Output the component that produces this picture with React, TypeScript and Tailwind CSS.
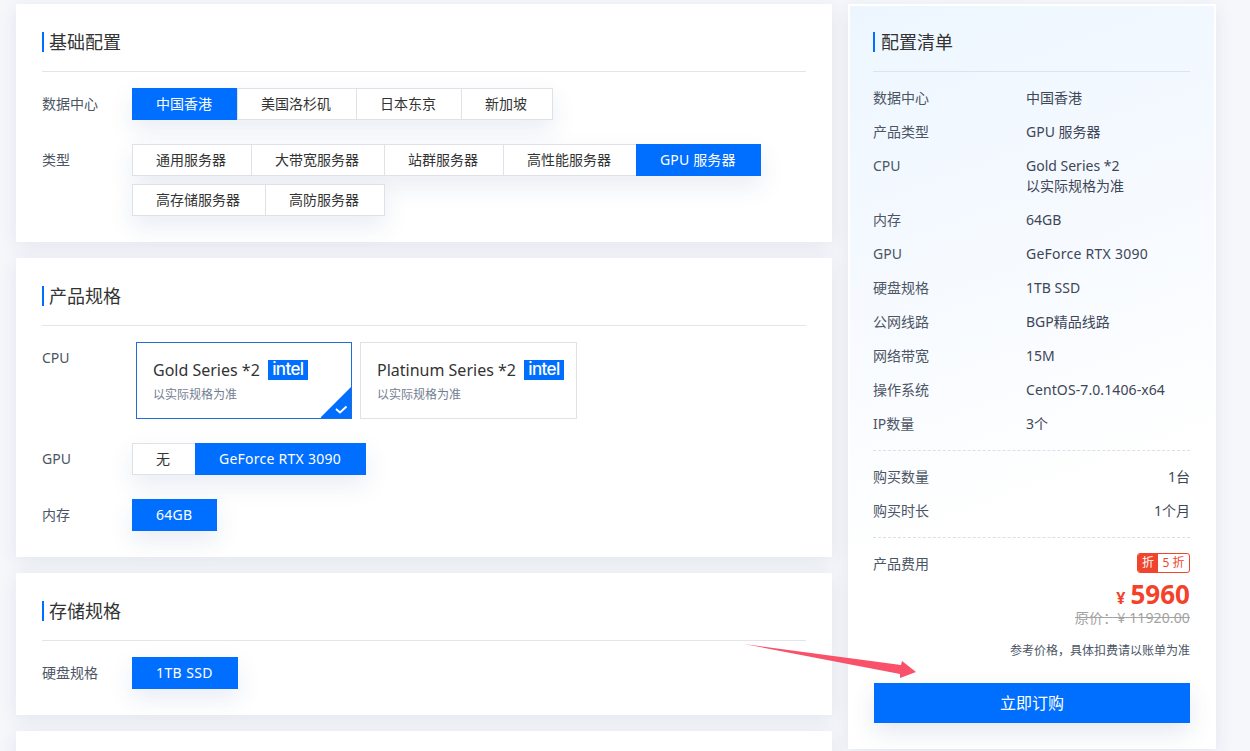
import React from "react";

const Heading = ({ children }: { children: React.ReactNode }) => (
  <div className="h-[68px] pt-7 border-b border-[#e3e5ea]">
    <div className="flex items-center h-5 border-l-2 border-[#006eff] pl-[5px] text-[18px] leading-5 text-[#333]">{children}</div>
  </div>
);

const Label = ({ children }: { children: React.ReactNode }) => (
  <div className="w-[90px] shrink-0 text-[14px] leading-8 text-[#4b5563]">{children}</div>
);

type Opt = { t: string; on?: boolean; wide?: string };

const Seg = ({ items }: { items: Opt[] }) => (
  <div className="flex h-8 w-fit shadow-[0_10px_24px_rgba(30,70,140,0.1)]">
    {items.map((o, i) => (
      <div
        key={o.t}
        className={
          (o.wide ?? "") +
          " " +
          (o.on
            ? "pl-[23px] pr-[25px] bg-[#006eff] border border-[#006eff] border-r-0 text-white text-[14px] leading-[30px] whitespace-nowrap"
            : i === items.length - 1
            ? "pl-[23px] pr-[25px] bg-white border border-[#dfe1e6] text-[#333] text-[14px] leading-[30px] whitespace-nowrap"
            : "pl-[23px] pr-[25px] bg-white border border-[#dfe1e6] border-r-0 text-[#333] text-[14px] leading-[30px] whitespace-nowrap")
        }
      >
        {o.t}
      </div>
    ))}
  </div>
);

const Card = ({ children }: { children: React.ReactNode }) => (
  <section className="bg-white px-[26px] pb-[26px] shadow-[0_4px_18px_rgba(40,60,100,0.09)]">{children}</section>
);

const CpuCard = ({ name, on }: { name: string; on?: boolean }) => (
  <div
    className={
      on
        ? "relative h-[77px] min-w-[216px] pl-4 pr-3 pt-[17px] bg-white border border-[#1f6fd6]"
        : "relative h-[77px] min-w-[216px] pl-4 pr-3 pt-[17px] bg-white border border-[#dfe1e6]"
    }
  >
    <div className="flex items-center h-5 text-[16px] text-[#333] whitespace-nowrap">
      <span>{name}</span>
      <span className="ml-2 w-10 h-5 bg-[#006eff] text-white font-['Inter',sans-serif] font-medium text-[17px] leading-[19px] text-center tracking-[-0.6px]">intel</span>
    </div>
    <div className="mt-[7px] text-[12px] leading-4 text-[#737d92]">以实际规格为准</div>
    {on && (
      <svg className="absolute right-0 bottom-0" width="30" height="31" viewBox="1 0 30 31">
        <path d="M31 0V31H0Z" fill="#006eff" />
        <path d="M16 22l4 3.5 6.5-6" fill="none" stroke="#fff" strokeWidth="2" />
      </svg>
    )}
  </div>
);

const Row = ({ k, v, sub, wide }: { k: string; v: string; sub?: string; wide?: string }) => (
  <div className="flex mb-[14px] text-[14px] leading-5">
    <div className="w-[153px] shrink-0 text-[#4b5563]">{k}</div>
    <div className="text-[#3d4656]">
      <div className={wide}>{v}</div>
      {sub && <div className="text-[#3d4656]">{sub}</div>}
    </div>
  </div>
);

const Between = ({ k, v }: { k: string; v: string }) => (
  <div className="flex justify-between mb-[14px] text-[14px] leading-5 text-[#4b5563]">
    <span>{k}</span>
    <span className="text-[#3d4656]">{v}</span>
  </div>
);

export default function App() {
  return (
    <div className="relative h-[751px] w-[1250px] overflow-hidden bg-[#f5f7fb] font-['Noto_Sans','Noto_Sans_CJK_SC',sans-serif]">
      <div className="flex items-start gap-4 pl-4 pt-1">
        <main className="w-[816px] shrink-0 flex flex-col gap-4">
          <Card>
            <Heading>基础配置</Heading>
            <div className="flex mt-4">
              <Label>数据中心</Label>
              <Seg items={[{ t: "中国香港", on: true }, { t: "美国洛杉矶" }, { t: "日本东京" }, { t: "新加坡" }]} />
            </div>
            <div className="flex mt-6">
              <Label>类型</Label>
              <div className="flex flex-col gap-2">
                <Seg items={[{ t: "通用服务器" }, { t: "大带宽服务器" }, { t: "站群服务器" }, { t: "高性能服务器" }, { t: "GPU 服务器", on: true, wide: "tracking-[0.15px]" }]} />
                <Seg items={[{ t: "高存储服务器" }, { t: "高防服务器" }]} />
              </div>
            </div>
          </Card>
          <Card>
            <Heading>产品规格</Heading>
            <div className="flex mt-4">
              <Label>CPU</Label>
              <div className="flex gap-2 ml-1">
                <CpuCard name="Gold Series *2" on />
                <CpuCard name="Platinum Series *2" />
              </div>
            </div>
            <div className="flex mt-6">
              <Label>GPU</Label>
              <Seg items={[{ t: "无" }, { t: "GeForce RTX 3090", on: true, wide: "tracking-[0.25px]" }]} />
            </div>
            <div className="flex mt-6">
              <Label>内存</Label>
              <Seg items={[{ t: "64GB", on: true, wide: "tracking-[0.25px]" }]} />
            </div>
          </Card>
          <Card>
            <Heading>存储规格</Heading>
            <div className="flex mt-4">
              <Label>硬盘规格</Label>
              <Seg items={[{ t: "1TB SSD", on: true, wide: "tracking-[0.4px]" }]} />
            </div>
          </Card>
          <Card>
            <div className="h-[100px]" />
          </Card>
        </main>

        <aside className="w-[368px] h-[745px] shrink-0 border-2 border-white bg-[linear-gradient(160deg,#edf6ff_0%,#f6faff_35%,#ffffff_65%)] pl-[23px] pr-[24px] shadow-[0_4px_18px_rgba(40,60,100,0.09)]">
          <div className="h-[66px] pt-[26px] border-b border-[#dfe4ec]">
            <div className="flex items-center h-5 border-l-2 border-[#006eff] pl-[6px] text-[18px] leading-5 text-[#333]">配置清单</div>
          </div>
          <div className="mt-4">
            <Row k="数据中心" v="中国香港" />
            <Row k="产品类型" v="GPU 服务器" />
            <Row k="CPU" v="Gold Series *2" sub="以实际规格为准" />
            <Row k="内存" v="64GB" />
            <Row k="GPU" v="GeForce RTX 3090" wide="tracking-[0.25px]" />
            <Row k="硬盘规格" v="1TB SSD" />
            <Row k="公网线路" v="BGP精品线路" />
            <Row k="网络带宽" v="15M" />
            <Row k="操作系统" v="CentOS-7.0.1406-x64" wide="tracking-[0.1px]" />
            <Row k="IP数量" v="3个" />
          </div>
          <div className="mt-4 pt-4 border-t border-dashed border-[#dcdfe5]">
            <Between k="购买数量" v="1台" />
            <Between k="购买时长" v="1个月" />
          </div>
          <div className="mt-4 pt-[15px] border-t border-dashed border-[#dcdfe5]">
            <div className="flex justify-between items-center h-5 text-[14px] text-[#4b5563]">
              <span>产品费用</span>
              <div className="flex h-5 w-[53px] rounded-[3px] border border-[#f0452c] text-[12px] leading-[18px] overflow-hidden">
                <span className="w-5 bg-[#f0452c] text-center text-white shrink-0">折</span>
                <span className="flex-1 text-center text-[#f0452c] whitespace-nowrap">5 折</span>
              </div>
            </div>
            <div className="flex justify-end items-baseline mt-[7px] h-[28px] leading-[28px] text-[#f4412a] font-bold">
              <span className="text-[16px] mr-[5px]">¥</span>
              <span className="text-[26px]">5960</span>
            </div>
            <div className="text-right text-[14px] leading-5 text-[#a3a3a3] line-through tracking-[0.12px]">原价：¥ 11920.00</div>
            <div className="mt-[13px] text-right text-[12px] leading-5 text-[#4b5563]">参考价格，具体扣费请以账单为准</div>
            <div className="mt-[22px] ml-px h-10 bg-[#006eff] text-center text-white text-[16px] leading-[41px] shadow-[0_10px_24px_rgba(30,70,140,0.12)]">立即订购</div>
          </div>
        </aside>
      </div>

      <svg className="absolute left-0 top-0 pointer-events-none" width="1250" height="751">
        <polygon points="744,644 901,665 902,661 916,672 900,678 900,674" fill="#f9516a" />
      </svg>
    </div>
  );
}
